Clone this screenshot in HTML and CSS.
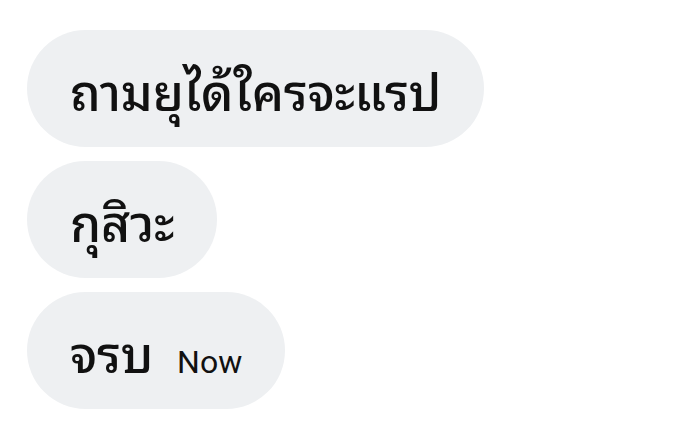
FILE: index.html
```html
<!DOCTYPE html>
<html lang="th">
<head>
<meta charset="utf-8">
<link rel="stylesheet" href="styles.css">
</head>
<body>
<div class="chat">
  <div class="bubble"><span class="msg">ถามยุได้ใครจะแรป</span></div>
  <div class="bubble"><span class="msg">กุสิวะ</span></div>
  <div class="bubble"><span class="msg">จรบ</span><span class="time">Now</span></div>
</div>
</body>
</html>
```
FILE: styles.css
```css
html, body {
  margin: 0;
  padding: 0;
  background: #ffffff;
}
.chat {
  display: flex;
  flex-direction: column;
  align-items: flex-start;
  gap: 14px;
  padding: 30px 0 0 27px;
}
.bubble {
  display: flex;
  align-items: baseline;
  height: 117px;
  box-sizing: border-box;
  padding: 0 43px;
  border-radius: 59px;
  background: #eef0f2;
}
.msg {
  font-family: "Noto Sans Thai Looped", sans-serif;
  font-size: 50px;
  font-weight: 500;
  letter-spacing: -0.3px;
  line-height: 117px;
  color: #111111;
}
.time {
  font-family: Roboto, "Noto Sans", sans-serif;
  font-size: 32px;
  color: #111111;
  margin-left: 24px;
}
```
